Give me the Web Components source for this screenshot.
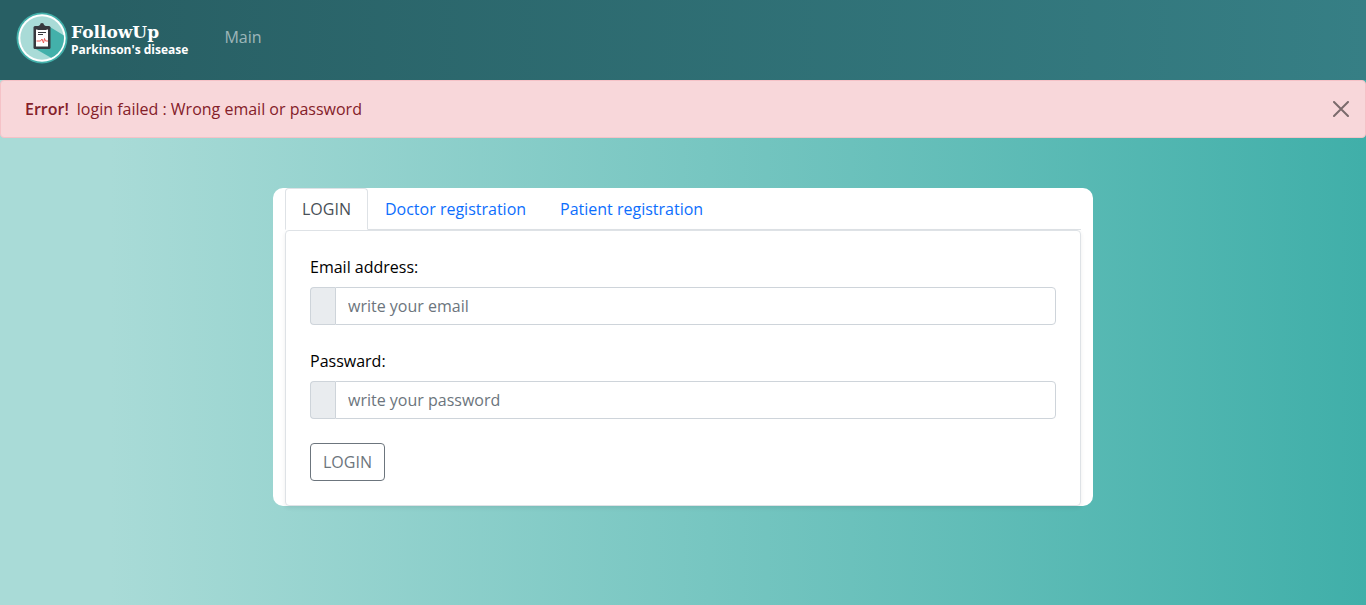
<!DOCTYPE html>
<html lang="en">
<head>
<meta charset="utf-8">
<meta name="viewport" content="width=device-width, initial-scale=1">
<title>FollowUp</title>
<style>
  body {
    margin: 0;
    font: 16px/24px "Open Sans", sans-serif;
    color: #000;
    background: #aadcd8;
  }
</style>
</head>
<body>
<followup-app></followup-app>

<template id="t-app">
  <style>
    :host {
      display: flex; flex-direction: column; min-height: 100vh;
      background: linear-gradient(90deg, #a9dbd7 8%, #40afa9 100%);
    }
    main { padding: 50px 20px; }
  </style>
  <nav-bar><nav-item href="#main">Main</nav-item></nav-bar>
  <alert-bar><strong slot="title">Error!</strong>login failed : Wrong email or password</alert-bar>
  <main>
    <tab-card>
      <tab-link slot="tabs" active>LOGIN</tab-link>
      <tab-link slot="tabs">Doctor registration</tab-link>
      <tab-link slot="tabs">Patient registration</tab-link>
      <login-form></login-form>
    </tab-card>
  </main>
</template>

<template id="t-nav">
  <style>
    :host { display: block; background: linear-gradient(90deg, #285f64 8%, #367f85 100%); }
    nav { display: flex; align-items: center; height: 80px; padding: 0 16px; gap: 28px; }
    a { display: flex; align-items: center; gap: 3px; color: #fff; text-decoration: none; }
    svg { display: block; width: 52px; height: 52px; margin-bottom: 4px; }
    .words { display: flex; flex-direction: column; font-weight: 700; white-space: nowrap; }
    .name { font: 900 17px/20px "DejaVu Serif", serif; }
    .sub { font-size: 12px; line-height: 16px; }
  </style>
  <nav>
    <a href="#home">
      <svg viewBox="0 0 52 52" aria-hidden="true">
        <defs><clipPath id="disc"><circle cx="26" cy="26" r="22"/></clipPath></defs>
        <circle cx="26" cy="26" r="25.5" fill="#43b0aa"/>
        <circle cx="26" cy="26" r="23.7" fill="#fff"/>
        <circle cx="26" cy="26" r="21.7" fill="#a9dbd7"/>
        <path clip-path="url(#disc)" d="M34 15l18 11v26H46L18 36z" fill="#43b0aa"/>
        <rect x="17.5" y="14" width="17" height="23" rx="1.5" fill="#37393e"/>
        <path d="M20 17.5h12v17H20z" fill="#fff"/>
        <path d="M21.5 14.5L24 13a2 2 0 0 1 4 0l2.500 1.500V18h-9z" fill="#37393e"/>
        <path d="M22 20.500h8M22 22.500h5" stroke="#37393e" stroke-width="1" fill="none"/>
        <path d="M20.500 29h4l1.500-2 1.500 4 1-4.500 1 2.500h2.500" stroke="#ee5a57" stroke-width="1" fill="none"/>
      </svg>
      <span class="words"><span class="name">FollowUp</span><span class="sub">Parkinson's disease</span></span>
    </a>
    <slot></slot>
  </nav>
</template>

<template id="t-item">
  <style>
    :host { display: block; }
    a { display: block; padding: 8px; color: rgba(255,255,255,.55); text-decoration: none; margin-bottom: 6px; }
  </style>
  <a><slot></slot></a>
</template>

<template id="t-alert">
  <style>
    :host {
      display: flex; align-items: center; justify-content: space-between;
      padding: 16px 16px 16px 24px; border: 1px solid #f5c2c7; border-radius: 4px;
      background: #f8d7da; color: #842029;
    }
    p { margin: 0; }
    ::slotted(strong) { font-weight: 600; margin-right: 8px; }
    button { display: block; padding: 0; border: 0; background: none; opacity: .5; }
    svg { display: block; width: 16px; height: 16px; }
  </style>
  <p role="alert"><slot name="title"></slot><slot></slot></p>
  <button type="button" aria-label="Close">
    <svg viewBox="0 0 16 16"><path d="M1 1l14 14M15 1L1 15" stroke="#000" stroke-width="2" stroke-linecap="round"/></svg>
  </button>
</template>

<template id="t-card">
  <style>
    :host {
      display: block; box-sizing: border-box; max-width: 820px; margin: 0 auto;
      padding: 0 12px; border-radius: 10px; background: #fff;
    }
    .tabs { display: flex; border-bottom: 1px solid #dee2e6; }
    .panel {
      padding: 24px; border: 1px solid #dee2e6; border-radius: 4px;
      box-shadow: 0 2px 4px rgba(0,0,0,.075);
    }
  </style>
  <div class="tabs"><slot name="tabs"></slot></div>
  <div class="panel"><slot></slot></div>
</template>

<template id="t-tab">
  <style>
    :host { display: block; margin-bottom: -1px; }
    a {
      display: block; padding: 8px 16px; color: #0d6efd; text-decoration: none;
      border: 1px solid transparent; border-radius: 4px 4px 0 0;
    }
    :host([active]) a { color: #495057; background: #fff; border-color: #dee2e6 #dee2e6 #fff; }
  </style>
  <a href="#tab"><slot></slot></a>
</template>

<template id="t-form">
  <style>
    :host { display: block; }
    form { display: flex; flex-direction: column; align-items: stretch; gap: 24px; }
    button {
      align-self: flex-start; padding: 6px 12px; border: 1px solid #6c757d; border-radius: 4px;
      background: #fff; color: #6c757d; font: inherit;
    }
  </style>
  <form>
    <text-field label="Email address:" type="email" placeholder="write your email"></text-field>
    <text-field label="Passward:" type="password" placeholder="write your password"></text-field>
    <button type="button">LOGIN</button>
  </form>
</template>

<template id="t-field">
  <style>
    :host { display: block; }
    label { display: block; margin-bottom: 8px; }
    .group { display: flex; }
    .addon {
      box-sizing: border-box; width: 25px; border: 1px solid #ced4da; border-right: 0;
      border-radius: 4px 0 0 4px; background: #e9ecef;
    }
    input {
      flex: 1; min-width: 0; box-sizing: border-box; height: 38px; margin: 0; padding: 6px 12px;
      border: 1px solid #ced4da; border-radius: 0 4px 4px 0; background: #fff; color: #212529;
      font: inherit; outline: none;
    }
    input::placeholder { color: #6c757d; opacity: 1; }
  </style>
  <label for="control"></label>
  <div class="group"><span class="addon"></span><input id="control"></div>
</template>

<script>
  class TemplateElement extends HTMLElement {
    constructor() {
      super();
      const template = document.getElementById(this.constructor.template);
      this.attachShadow({ mode: "open" }).append(template.content.cloneNode(true));
    }
  }
  class TextField extends TemplateElement {
    static template = "t-field";
    connectedCallback() {
      const input = this.shadowRoot.querySelector("input");
      this.shadowRoot.querySelector("label").textContent = this.getAttribute("label");
      input.type = this.getAttribute("type");
      input.placeholder = this.getAttribute("placeholder");
    }
  }
  class NavItem extends TemplateElement {
    static template = "t-item";
    connectedCallback() {
      this.shadowRoot.querySelector("a").href = this.getAttribute("href");
    }
  }
  customElements.define("text-field", TextField);
  customElements.define("nav-item", NavItem);
  customElements.define("login-form", class extends TemplateElement { static template = "t-form"; });
  customElements.define("tab-link", class extends TemplateElement { static template = "t-tab"; });
  customElements.define("tab-card", class extends TemplateElement { static template = "t-card"; });
  customElements.define("alert-bar", class extends TemplateElement { static template = "t-alert"; });
  customElements.define("nav-bar", class extends TemplateElement { static template = "t-nav"; });
  customElements.define("followup-app", class extends TemplateElement { static template = "t-app"; });
</script>
</body>
</html>
